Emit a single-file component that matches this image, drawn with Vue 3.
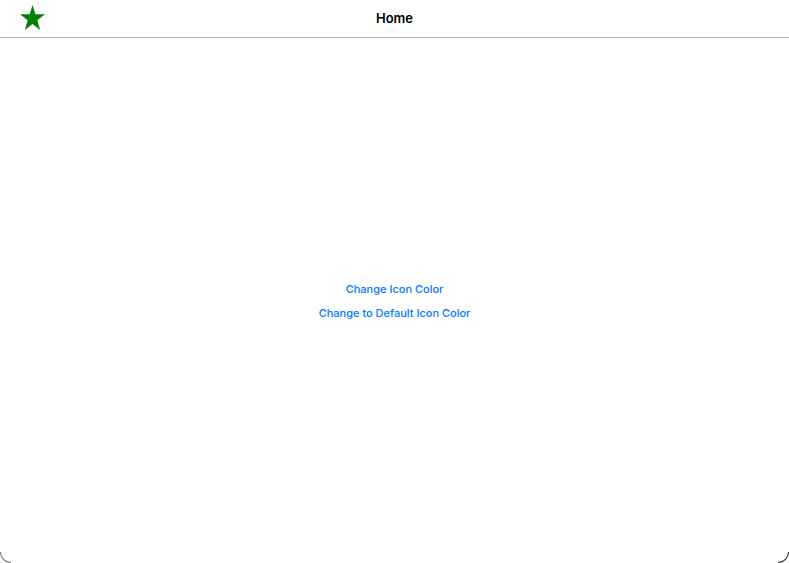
<script setup>
import { ref } from 'vue'

const defaultColor = '#007aff'
const iconColor = ref('green')
</script>

<template>
  <div class="screen">
    <header class="bar">
      <button class="star" type="button" aria-label="Favorite">
        <svg viewBox="0 0 26 26" :fill="iconColor" aria-hidden="true">
          <path d="M13 0 L16 9.6 H26 L18 15.8 L21 26 L13 19.8 L5 26 L8 15.8 L0 9.6 H10 Z" />
        </svg>
      </button>
      <h1>Home</h1>
    </header>
    <main class="content">
      <button type="button" @click="iconColor = 'red'">Change Icon Color</button>
      <button type="button" @click="iconColor = defaultColor">Change to Default Icon Color</button>
    </main>
  </div>
</template>

<style>
body {
  background: #fff;
}
</style>

<style scoped>
.screen {
  position: relative;
  box-sizing: border-box;
  min-height: 100vh;
  display: flex;
  flex-direction: column;
  background: #fff;
  font-family: Inter, "Liberation Sans", sans-serif;
}
/* curved window outline in the two bottom corners */
.screen::before,
.screen::after {
  content: "";
  position: absolute;
  bottom: 0;
  box-sizing: border-box;
  width: 11px;
  height: 11px;
}
.screen::before {
  left: 0;
  border-left: 1px solid #777;
  border-bottom: 1px solid #777;
  border-bottom-left-radius: 11px;
}
.screen::after {
  right: 0;
  border-right: 1px solid #333;
  border-bottom: 1px solid #333;
  border-bottom-right-radius: 11px;
}
.bar {
  display: grid;
  grid-template-columns: 1fr auto 1fr;
  align-items: center;
  box-sizing: border-box;
  height: 38px;
  padding: 0 20px 2px;
  border-bottom: 1px solid #b3b3b3;
}
h1 {
  margin: 0;
  font-size: 13px;
  line-height: 16px;
  font-weight: 600;
  color: #000;
}
button {
  padding: 0;
  border: 0;
  background: none;
  font: inherit;
  cursor: pointer;
}
.star {
  justify-self: start;
}
.star svg {
  display: block;
  width: 25px;
  height: 25px;
}
.content {
  flex: 1;
  display: flex;
  flex-direction: column;
  align-items: center;
  justify-content: center;
  gap: 8px;
}
.content button {
  font-size: 11px;
  line-height: 16px;
  font-weight: 500;
  color: #007aff;
}
</style>
